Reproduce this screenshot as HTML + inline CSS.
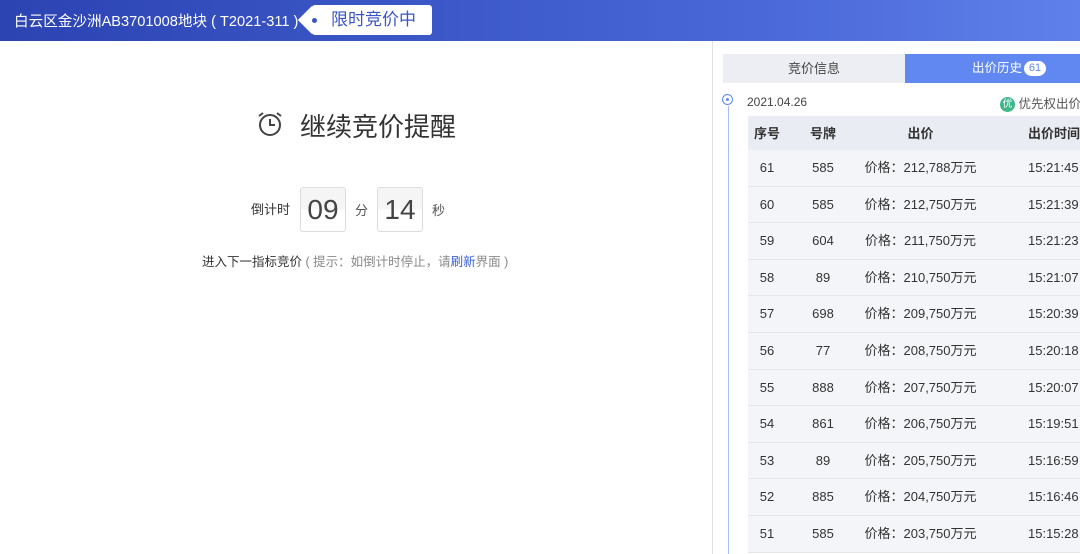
<!DOCTYPE html><html><head><meta charset="utf-8"><style>
body{margin:0;width:1080px;height:554px;overflow:hidden;background:#fff;font-family:"Liberation Sans","Noto Sans CJK SC",sans-serif;position:relative}
.hd{position:absolute;left:0;top:0;width:1080px;height:41px;background:linear-gradient(90deg,#2c43b2 0%,#3c58c8 40%,#4a68d8 70%,#5f80ea 100%)}
.t{position:absolute;left:14px;top:10px;color:#fff;font-size:14.6px;white-space:nowrap}
.tag{position:absolute;left:312px;top:5px;width:120px;height:30px;background:#fff;border-radius:3px;color:#3a55c6;font-size:17px;line-height:30px}
.tag:before{content:"";position:absolute;left:-10px;top:5px;width:20px;height:20px;background:#fff;transform:rotate(45deg)}
.tag i{position:absolute;left:0;top:13px;width:5px;height:5px;border-radius:50%;background:#3a55c6}
.tag span{position:absolute;left:19px}
.a{position:absolute;white-space:nowrap}
.box{position:absolute;top:187px;width:44px;height:43px;border:1px solid #ddd;border-radius:3px;background:linear-gradient(#f5f5f5 50%,#fff 50%);font-size:28px;color:#444;text-align:center;line-height:43px}
.tbl{position:absolute;left:748px;top:116px;width:340px;font-size:13px;color:#333}
.r{height:35.6px;border-bottom:1px solid #e4e6ec;background:#f4f5f8;position:relative;line-height:35px}
.r.h{background:#e9ecf3;height:34px;border:0;font-weight:bold}
.r span{position:absolute;text-align:center}
.c1{left:0;width:38px}.c2{left:55px;width:40px}.c3{left:110px;width:125px}.c4{left:280px;text-align:left!important}
</style></head><body>
<div class="hd"><div class="t">白云区金沙洲AB3701008地块 ( T2021-311 )</div><div class="tag"><i></i><span>限时竞价中</span></div></div>
<svg class="a" style="left:256px;top:110px" width="28" height="28" viewBox="0 0 28 28" fill="none" stroke="#444" stroke-width="2"><circle cx="14" cy="15" r="10"/><path d="M14 9v6h5M3 6l4-3M25 6l-4-3"/></svg>
<div class="a" style="left:300px;top:107px;font-size:26px;color:#333">继续竞价提醒</div>
<div class="a" style="left:251px;top:199px;font-size:13px;color:#333">倒计时</div>
<div class="box" style="left:300px">09</div>
<div class="a" style="left:355px;top:200px;font-size:13px;color:#555">分</div>
<div class="box" style="left:377px">14</div>
<div class="a" style="left:432px;top:200px;font-size:13px;color:#555">秒</div>
<div class="a" style="left:202px;top:251px;font-size:12.5px;color:#333">进入下一指标竞价<span style="color:#888"> ( 提示：如倒计时停止，请<span style="color:#3a60d8">刷新</span>界面 )</span></div>
<div class="a" style="left:712px;top:41px;width:1px;height:513px;background:#e2e2e2"></div>
<div class="a" style="left:723px;top:54px;width:182px;height:29px;background:#eceef3;text-align:center;line-height:29px;font-size:13px;color:#444">竞价信息</div>
<div class="a" style="left:905px;top:54px;width:175px;height:29px;background:#6088f0;line-height:29px;font-size:12.5px;color:#fff"><span style="position:absolute;left:67px">出价历史</span><span style="position:absolute;left:119px;top:7px;width:22px;height:15px;border-radius:8px;background:#fff;color:#6088f0;font-size:11px;line-height:15px;text-align:center">61</span></div>
<div class="a" style="left:722px;top:94px;width:11px;height:11px;border:1px solid #6088f0;border-radius:50%;box-sizing:border-box"></div>
<div class="a" style="left:726px;top:98px;width:3px;height:3px;border-radius:50%;background:#6088f0"></div>
<div class="a" style="left:728px;top:106px;width:1px;height:448px;background:#a8bcf5"></div>
<div class="a" style="left:747px;top:95px;font-size:12px;color:#444">2021.04.26</div>
<div class="a" style="left:1000px;top:93px;font-size:12.5px;color:#555"><span style="display:inline-block;width:15px;height:15px;border-radius:50%;background:#3fb58a;color:#fff;font-size:10px;text-align:center;line-height:15px;vertical-align:1px">优</span> 优先权出价</div>
<div class="tbl">
<div class="r h"><span class="c1">序号</span><span class="c2">号牌</span><span class="c3">出价</span><span class="c4">出价时间</span></div>
<div class="r"><span class="c1">61</span><span class="c2">585</span><span class="c3">价格：212,788万元</span><span class="c4">15:21:45</span></div>
<div class="r"><span class="c1">60</span><span class="c2">585</span><span class="c3">价格：212,750万元</span><span class="c4">15:21:39</span></div>
<div class="r"><span class="c1">59</span><span class="c2">604</span><span class="c3">价格：211,750万元</span><span class="c4">15:21:23</span></div>
<div class="r"><span class="c1">58</span><span class="c2">89</span><span class="c3">价格：210,750万元</span><span class="c4">15:21:07</span></div>
<div class="r"><span class="c1">57</span><span class="c2">698</span><span class="c3">价格：209,750万元</span><span class="c4">15:20:39</span></div>
<div class="r"><span class="c1">56</span><span class="c2">77</span><span class="c3">价格：208,750万元</span><span class="c4">15:20:18</span></div>
<div class="r"><span class="c1">55</span><span class="c2">888</span><span class="c3">价格：207,750万元</span><span class="c4">15:20:07</span></div>
<div class="r"><span class="c1">54</span><span class="c2">861</span><span class="c3">价格：206,750万元</span><span class="c4">15:19:51</span></div>
<div class="r"><span class="c1">53</span><span class="c2">89</span><span class="c3">价格：205,750万元</span><span class="c4">15:16:59</span></div>
<div class="r"><span class="c1">52</span><span class="c2">885</span><span class="c3">价格：204,750万元</span><span class="c4">15:16:46</span></div>
<div class="r"><span class="c1">51</span><span class="c2">585</span><span class="c3">价格：203,750万元</span><span class="c4">15:15:28</span></div>
</div>
</body></html>
